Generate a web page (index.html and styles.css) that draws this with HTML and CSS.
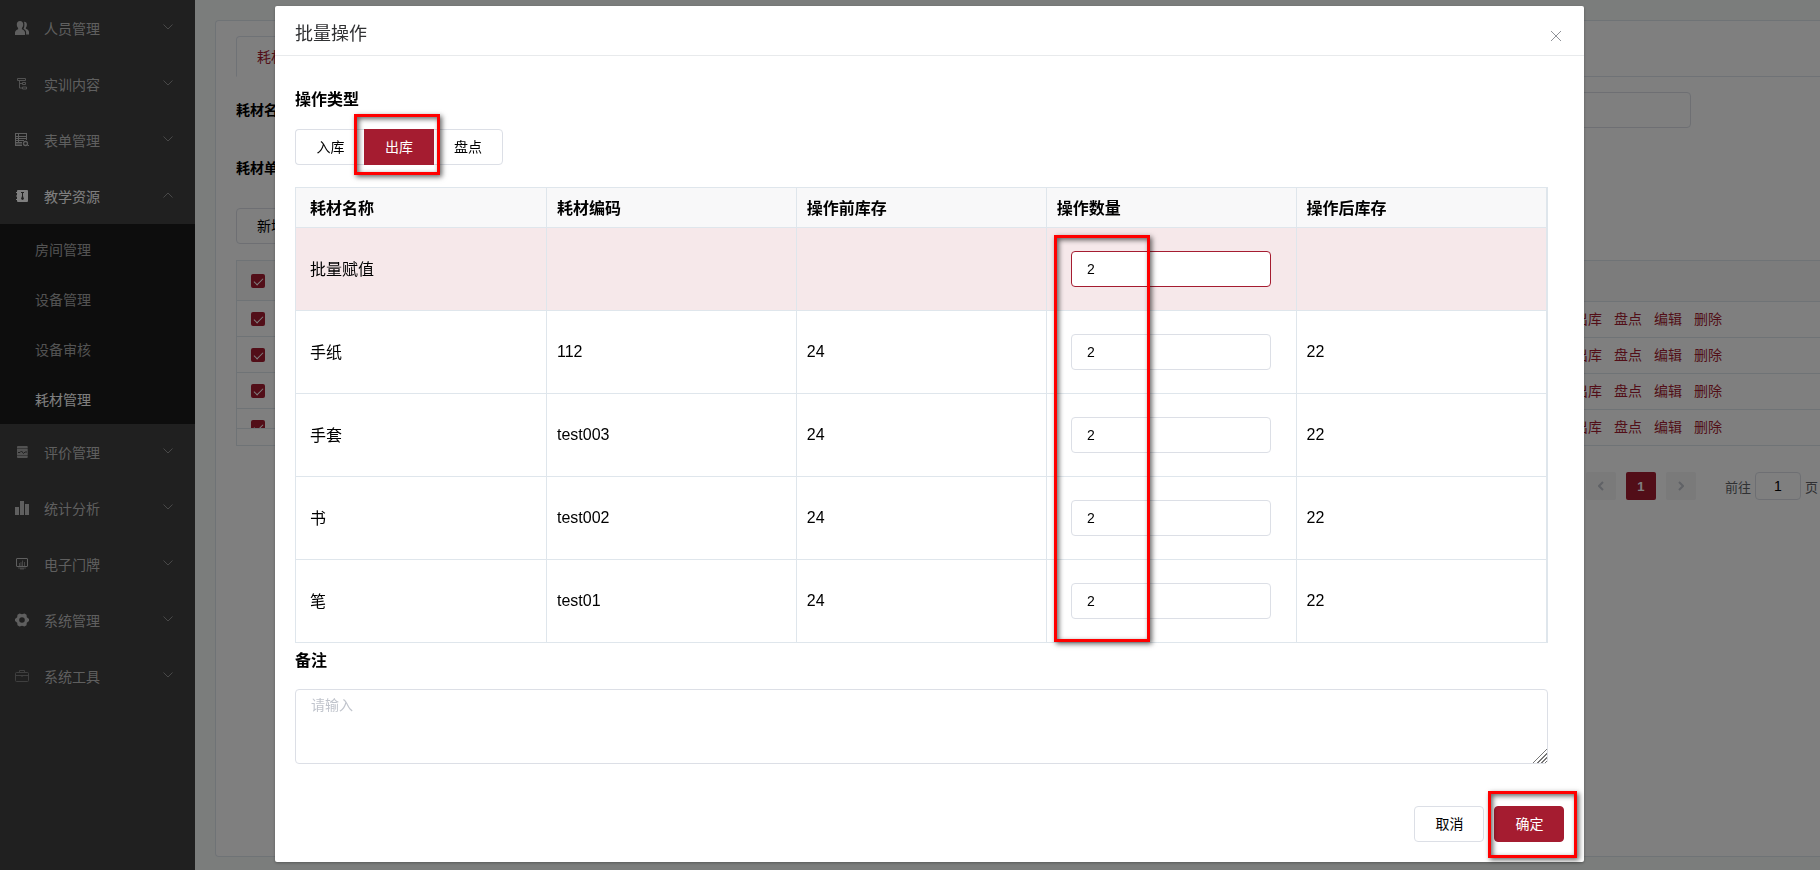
FILE: index.html
```html
<!DOCTYPE html>
<html lang="zh-CN">
<head>
<meta charset="utf-8">
<title>耗材管理</title>
<link rel="stylesheet" href="styles.css">
</head>
<body>
<div class="app">
  <nav class="sidebar">
    <a class="menu-item" href="#"><svg class="menu-icon" viewBox="0 0 14 14"><path fill="currentColor" d="M5 0c2 0 3.200 1.300 3.200 3.400 0 1.500-.5 2.700-1.300 3.500v1.300c1.600.8 3 1.600 3.100 3.300V14H0v-2.500c.1-1.700 1.500-2.500 3.100-3.300V6.900C2.300 6.100 1.800 4.900 1.800 3.400 1.800 1.300 3 0 5 0zM9 .8c1.800-.1 2.900 1.100 2.900 2.900 0 1.300-.4 2.300-1.100 3v1.100c1.700.7 3.200 1.600 3.200 3.200v2.500h-2.900v-2.200c-.1-1.700-1.200-2.700-2.600-3.500.6-1 .9-2 .9-3.400C9.400 2.900 9.300 1.700 9 .8z"/></svg><span>人员管理</span><svg class="arrow" viewBox="0 0 10 6"><path d="M.5.500 5 5 9.500.5"/></svg></a>
    <a class="menu-item" href="#"><svg class="menu-icon soft" viewBox="0 0 14 14"><g fill="none" stroke="currentColor"><path d="M2.500 1.500h8v2h-8zM4.500 3.500v7.500h3M4.500 6.500h3M7.500 5.500h3v2h-3zM7.500 10h4v2h-4z"/></g></svg><span>实训内容</span><svg class="arrow" viewBox="0 0 10 6"><path d="M.5.500 5 5 9.500.5"/></svg></a>
    <a class="menu-item" href="#"><svg class="menu-icon" viewBox="0 0 14 14"><g fill="none" stroke="currentColor"><path d="M0 .5h12M.5 0v12.500M11.500 0v7M0 12.500h7M1 9.500h6M3.500 0v9M1 3.500h10.500M1 5.500h10.500M1 7.500h8M1 11h6"/><circle cx="10.500" cy="10.500" r="2" stroke-width="1.300"/><path d="M12.500 12.500H14"/></g></svg><span>表单管理</span><svg class="arrow" viewBox="0 0 10 6"><path d="M.5.500 5 5 9.500.5"/></svg></a>
    <a class="menu-item open" href="#"><svg class="menu-icon" viewBox="0 0 14 14"><path fill="currentColor" fill-rule="evenodd" d="M3 1h9q1 0 1 1v10q0 1-1 1H3q-1 0-1-1v-1H1v-1h1V7.500H1v-1h1V4H1V3h1V2q0-1 1-1zm3 2v1h1v3l-1 3 1.500 1L9 10 8 7V4h1V3z"/></svg><span>教学资源</span><svg class="arrow" viewBox="0 0 10 6"><path d="M.5 5.500 5 1l4.500 4.500"/></svg></a>
    <div class="submenu">
      <a href="#">房间管理</a>
      <a href="#">设备管理</a>
      <a href="#">设备审核</a>
      <a class="current" href="#">耗材管理</a>
    </div>
    <a class="menu-item" href="#"><svg class="menu-icon soft" viewBox="0 0 14 14"><path fill="currentColor" d="M3 1h9q.7 0 .7.700V3H2V1.700Q2 1 3 1zM2 3.500h10.700v7H2zM2 11h10.700v1q0 1-.7 1H3q-1 0-1-1z"/><path d="M3 7.500h2L6.500 6l2 2.500L10 7h2" fill="none" stroke="#404040"/></svg><span>评价管理</span><svg class="arrow" viewBox="0 0 10 6"><path d="M.5.500 5 5 9.500.5"/></svg></a>
    <a class="menu-item" href="#"><svg class="menu-icon" viewBox="0 0 14 14"><path fill="currentColor" d="M0 6h4v8H0zM5 0h4v14H5zM10 3h4v11h-4z"/></svg><span>统计分析</span><svg class="arrow" viewBox="0 0 10 6"><path d="M.5.500 5 5 9.500.5"/></svg></a>
    <a class="menu-item" href="#"><svg class="menu-icon" viewBox="0 0 14 14"><rect x="1.500" y="1.500" width="11" height="8" rx=".5" fill="none" stroke="currentColor"/><path fill="currentColor" opacity=".6" d="M4 6h1v3H4zM5.500 5h1v4h-1zM7 3.500h1V9H7zM9 5h1v4H9zM3 10.500h8v1H3zM5 11.500h4v1H5z"/></svg><span>电子门牌</span><svg class="arrow" viewBox="0 0 10 6"><path d="M.5.500 5 5 9.500.5"/></svg></a>
    <a class="menu-item" href="#"><svg class="menu-icon" viewBox="0 0 14 14"><path fill="currentColor" fill-rule="evenodd" d="M4.500.5 7 1.300 9.500.5l2 1.200.3 2.500L14 6v2l-2.200 1.800-.3 2.500-2 1.200L7 12.700l-2.500.8-2-1.200-.3-2.500L0 8V6l2.200-1.800.3-2.500zM7 4.200a2.800 2.800 0 1 0 0 5.600 2.800 2.800 0 0 0 0-5.600z"/></svg><span>系统管理</span><svg class="arrow" viewBox="0 0 10 6"><path d="M.5.500 5 5 9.500.5"/></svg></a>
    <a class="menu-item" href="#"><svg class="menu-icon faint" viewBox="0 0 14 14"><g fill="none" stroke="currentColor"><rect x=".5" y="3.500" width="13" height="9" rx="1"/><path d="M4.500 3.500v-2h5v2M.5 6.500h13M7 6v2"/></g></svg><span>系统工具</span><svg class="arrow" viewBox="0 0 10 6"><path d="M.5.500 5 5 9.500.5"/></svg></a>
  </nav>

  <main class="page">
    <section class="card">
      <div class="tabs"><button class="tab" type="button">耗材</button></div>
      <div class="filter"><label for="name">耗材名</label><input id="name" type="text"></div>
      <div class="filter"><span>耗材单</span></div>
      <div class="toolbar"><button class="btn" type="button">新增</button></div>
      <div class="list">
        <table class="list-table">
          <thead><tr><th></th></tr></thead>
          <tbody>
            <tr><td><a href="#">出库</a><a href="#">盘点</a><a href="#">编辑</a><a href="#">删除</a></td></tr>
            <tr><td><a href="#">出库</a><a href="#">盘点</a><a href="#">编辑</a><a href="#">删除</a></td></tr>
            <tr><td><a href="#">出库</a><a href="#">盘点</a><a href="#">编辑</a><a href="#">删除</a></td></tr>
            <tr><td><a href="#">出库</a><a href="#">盘点</a><a href="#">编辑</a><a href="#">删除</a></td></tr>
          </tbody>
        </table>
        <div class="fixed-col">
          <div class="check head"><input type="checkbox" checked></div>
          <div class="check"><input type="checkbox" checked></div>
          <div class="check"><input type="checkbox" checked></div>
          <div class="check"><input type="checkbox" checked></div>
          <div class="check"><input type="checkbox" checked></div>
        </div>
      </div>
      <div class="pager">
        <button class="page-btn" type="button"><svg viewBox="0 0 6 10"><path d="M5 1 1 5l4 4"/></svg></button>
        <button class="page-btn active" type="button">1</button>
        <button class="page-btn" type="button"><svg viewBox="0 0 6 10"><path d="m1 1 4 4-4 4"/></svg></button>
        <label class="jump">前往<input type="text" value="1">页</label>
      </div>
    </section>
  </main>
</div>

<div class="overlay">
  <div class="dialog" role="dialog" aria-labelledby="dialog-title">
    <header class="dialog-head">
      <h1 id="dialog-title">批量操作</h1>
      <button class="close" type="button"><svg viewBox="0 0 10 10"><path d="m0 0 10 10M10 0 0 10"/></svg></button>
    </header>
    <div class="dialog-body">
      <h2>操作类型</h2>
      <div class="radio-group">
        <label><input type="radio" name="type"><span>入库</span></label>
        <label><input type="radio" name="type" checked><span>出库</span></label>
        <label><input type="radio" name="type"><span>盘点</span></label>
        <div class="mark mark-type"></div>
      </div>
      <table class="stock">
        <thead><tr><th>耗材名称</th><th>耗材编码</th><th>操作前库存</th><th>操作数量</th><th>操作后库存</th></tr></thead>
        <tbody>
          <tr class="batch"><td>批量赋值</td><td></td><td></td><td><div class="qty"><input class="focus" type="text" value="2"><div class="mark mark-qty"></div></div></td><td></td></tr>
          <tr><td>手纸</td><td>112</td><td>24</td><td><div class="qty"><input type="text" value="2"></div></td><td>22</td></tr>
          <tr><td>手套</td><td>test003</td><td>24</td><td><div class="qty"><input type="text" value="2"></div></td><td>22</td></tr>
          <tr><td>书</td><td>test002</td><td>24</td><td><div class="qty"><input type="text" value="2"></div></td><td>22</td></tr>
          <tr><td>笔</td><td>test01</td><td>24</td><td><div class="qty"><input type="text" value="2"></div></td><td>22</td></tr>
        </tbody>
      </table>
      <h2><label for="remark">备注</label></h2>
      <textarea id="remark" placeholder="请输入"></textarea>
    </div>
    <footer class="dialog-foot">
      <button class="btn" type="button">取消</button>
      <div class="confirm"><button class="btn primary" type="button">确定</button><div class="mark mark-confirm"></div></div>
    </footer>
  </div>
</div>
</body>
</html>
```
FILE: styles.css
```css
* { box-sizing: border-box; }

body {
  margin: 0;
  font-family: "Liberation Sans", "Noto Sans CJK SC", sans-serif;
  font-size: 14px;
  color: #000;
}

button, input, textarea { font: inherit; color: inherit; }
a { text-decoration: none; }
h1, h2 { margin: 0; }

.app { display: flex; height: 100vh; overflow: hidden; }

/* sidebar */
.sidebar { width: 195px; flex: none; background: #404040; }
.menu-item {
  display: flex;
  align-items: center;
  height: 56px;
  padding: 0 22px 0 15px;
  color: #bfbfbf;
}
.menu-item span { flex: 1; }
.menu-icon { width: 14px; height: 14px; margin-right: 15px; }
.soft { opacity: 0.8; }
.faint { opacity: 0.5; }
.arrow { width: 10px; height: 6px; margin-bottom: 2px; fill: none; stroke: #909090; }
.open { color: #fff; }
.submenu { background: #1a1a1a; }
.submenu a {
  display: flex;
  align-items: center;
  height: 50px;
  padding-left: 35px;
  color: #a6a6a6;
}
.submenu .current { color: #fff; }

/* page under the dialog */
.page { flex: 1; min-width: 0; padding: 20px 0 13px 20px; background: #f6faf8; }
.card {
  height: 100%;
  padding: 15px 0 0 20px;
  border: 1px solid #dfe6ec;
  border-right: 0;
  border-radius: 4px 0 0 4px;
  background: #fff;
}
.tabs { height: 41px; border-bottom: 1px solid #dfe4ed; }
.tab {
  height: 41px;
  padding: 0 20px 2px;
  border: 1px solid #dfe4ed;
  border-bottom-color: #fff;
  border-radius: 4px 4px 0 0;
  background: #fff;
  color: #a51c30;
}
.filter {
  display: flex;
  align-items: center;
  justify-content: space-between;
  height: 36px;
  margin: 15px 129px 22px 0;
  font-weight: 700;
}
.filter label, .filter span { padding-bottom: 2px; }
.filter input { width: 300px; height: 36px; border: 1px solid #dcdfe6; border-radius: 4px; }
.btn {
  display: block;
  height: 36px;
  padding: 0 20px 2px;
  border: 1px solid #dcdfe6;
  border-radius: 4px;
  background: #fff;
}
.primary { border-color: #a51c30; background: #a51c30; color: #fff; }
.list { position: relative; margin-top: 16px; border-left: 1px solid #dfe6ec; }
.list-table { width: 100%; border-collapse: collapse; }
.list-table th { height: 41px; border-top: 1px solid #dfe6ec; background: #f8f8f9; }
.list-table td {
  height: 36px;
  padding: 0 98px 4px 0;
  border-top: 1px solid #dfe6ec;
  border-bottom: 1px solid #dfe6ec;
  text-align: right;
}
.list-table a { margin-left: 12px; color: #a51c30; }
.fixed-col {
  position: absolute;
  top: 0;
  left: 0;
  width: 55px;
  height: 169px;
  overflow: hidden;
  border-top: 1px solid #dfe6ec;
  border-bottom: 1px solid #dfe6ec;
  background: #fff;
}
.check { height: 36px; padding: 11px 14px; border-bottom: 1px solid #dfe6ec; }
.check.head { height: 40px; padding-top: 13px; background: #f8f8f9; }
.check input {
  position: relative;
  display: block;
  width: 14px;
  height: 14px;
  margin: 0;
  appearance: none;
  border-radius: 2px;
  background: #a51c30;
}
.check input::after {
  content: "";
  position: absolute;
  top: 2px;
  left: 5px;
  width: 4px;
  height: 8px;
  border: solid #fff;
  border-width: 0 1px 1px 0;
  transform: rotate(45deg);
}
.pager {
  display: flex;
  justify-content: flex-end;
  gap: 10px;
  padding: 26px 2px 0 0;
  font-size: 13px;
}
.page-btn {
  display: grid;
  place-items: center;
  width: 30px;
  height: 28px;
  padding: 0;
  border: 0;
  border-radius: 2px;
  background: #f4f4f5;
  font-weight: 700;
}
.page-btn svg { width: 6px; height: 10px; fill: none; stroke: #c0c4cc; stroke-width: 2; }
.page-btn.active { background: #a51c30; color: #fff; }
.jump { display: flex; align-items: center; gap: 4px; margin-left: 19px; color: #606266; }
.jump input {
  width: 46px;
  height: 28px;
  padding: 0;
  border: 1px solid #dcdfe6;
  border-radius: 4px;
  color: #000;
  font-size: 14px;
  text-align: center;
}

/* dialog */
.overlay { position: fixed; inset: 0; padding: 6px 0 0 275px; background: rgba(0, 0, 0, 0.5); }
.dialog {
  width: calc(72vw - 1px);
  border-radius: 2px;
  background: #fff;
  box-shadow: 0 1px 3px rgba(0, 0, 0, 0.3);
}
.dialog-head {
  display: flex;
  align-items: center;
  justify-content: space-between;
  height: 50px;
  padding: 2px 23px 0 20px;
  border-bottom: 1px solid #e8eaec;
}
.dialog-head h1 { font-size: 18px; font-weight: 400; color: #303133; }
.close { padding: 8px 0 0; border: 0; background: none; }
.close svg { display: block; width: 10px; height: 10px; stroke: #909399; }
.dialog-body { padding: 32px 36px 22px 20px; }
.dialog-body h2 { font-size: 16px; line-height: 24px; }
.radio-group { position: relative; display: flex; margin: 17px 0 22px; }
.radio-group input { position: absolute; opacity: 0; }
.radio-group span {
  display: grid;
  place-items: center;
  width: 70px;
  height: 36px;
  margin-right: -1px;
  padding-bottom: 2px;
  border: 1px solid #dcdfe6;
}
.radio-group label:first-child span { border-right: 0; border-radius: 4px 0 0 4px; }
.radio-group label:nth-child(3) span { border-radius: 0 4px 4px 0; }
.radio-group input:checked + span { position: relative; border-color: #a51c30; background: #a51c30; color: #fff; }
.stock {
  width: 100%;
  margin-bottom: 6px;
  border: 1px solid #dfe6ec;
  border-right-width: 2px;
  border-spacing: 0;
  table-layout: fixed;
  font-size: 16px;
}
.stock th, .stock td { padding: 0 10px; border-right: 1px solid #dfe6ec; text-align: left; }
.stock th:first-child { width: 251px; }
.stock th:first-child, .stock td:first-child { padding: 0 14px 2px; }
.stock th:last-child, .stock td:last-child { border-right: 0; }
.stock th { height: 40px; padding-bottom: 2px; border-bottom: 1px solid #dfe6ec; background: #f8f8f9; }
.stock td { height: 83px; border-bottom: 1px solid #dfe6ec; }
.stock tr:last-child td { height: 82px; border-bottom: 0; }
.batch { background: #f6e8ea; }
.qty { position: relative; width: 200px; margin: 0 auto; }
.qty input {
  display: block;
  width: 100%;
  height: 36px;
  padding: 0 15px;
  border: 1px solid #dcdfe6;
  border-radius: 4px;
  background: #fff;
  font-size: 14px;
}
.qty .focus { border-color: #a51c30; }
textarea {
  display: block;
  width: 100%;
  height: 75px;
  margin-top: 16px;
  padding: 4px 15px;
  border: 1px solid #dcdfe6;
  border-radius: 4px;
  resize: vertical;
}
textarea::placeholder { color: #c0c4cc; }
textarea::-webkit-resizer {
  background: linear-gradient(135deg, #fff 50%, #777 50% 56%, #fff 56% 64%, #777 64% 70%, #fff 70% 78%, #777 78% 84%, #fff 84% 91%, #777 91% 96%, #fff 96%);
}
.dialog-foot { display: flex; justify-content: flex-end; gap: 10px; padding: 20px; }
.confirm { position: relative; }

/* highlight frames */
.mark {
  position: absolute;
  z-index: 1;
  border: 3px solid #f00;
  box-shadow: 2px 2px 5px rgba(0, 0, 0, 0.6), inset 2px 2px 5px rgba(0, 0, 0, 0.6);
  pointer-events: none;
}
.mark-type { top: -15px; left: 59px; width: 86px; height: 61px; }
.mark-qty { top: -16px; left: -17px; width: 96px; height: 407px; }
.mark-confirm { top: -15px; left: -6px; width: 89px; height: 67px; }
```
